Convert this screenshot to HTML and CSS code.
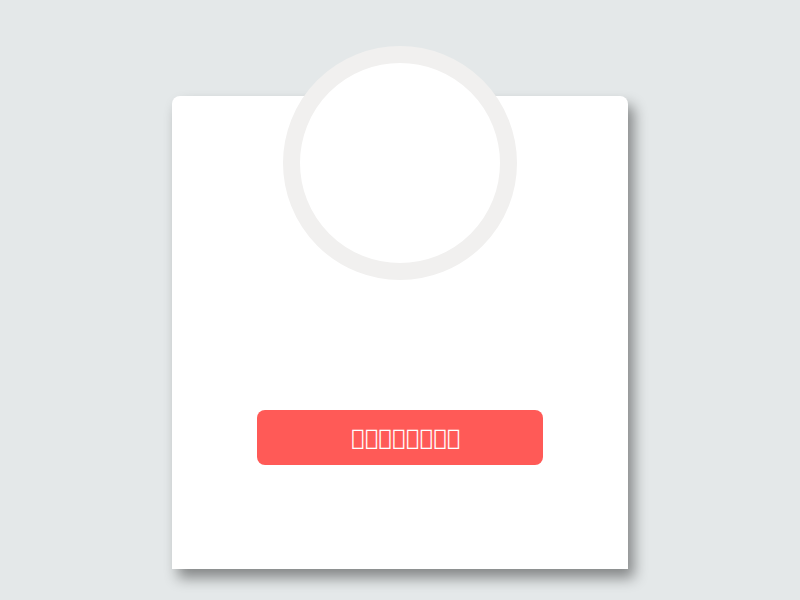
FILE: index.html
```html
<!DOCTYPE html>
<html lang="en">
<head>
  <meta charset="UTF-8">
  <meta name="viewport" content="width=device-width, initial-scale=1.0">
  <title>Card</title>
  <link rel="stylesheet" href="styles.css">
</head>
<body>

  <div class="card">
    <div class="avatar"></div>
    <button class="action-button">&#xE000;&#xE001;&#xE002;&#xE003;&#xE004;&#xE005;&#xE006;&#xE007;</button>
  </div>

</body>
</html>
```

FILE: styles.css
```css
body {
  margin: 0;
  height: 600px;
  background: #e4e8e9;
  font-family: "DejaVu Sans", sans-serif;
  overflow: hidden;
}
.card {
  box-sizing: border-box;
  width: 456px;
  height: 473px;
  margin: 96px auto 0;
  background: #fff;
  border-radius: 8px 8px 0 0;
  box-shadow: 6px 9px 14px rgba(0, 0, 0, 0.42);
  display: flex;
  flex-direction: column;
  align-items: center;
}
.avatar {
  box-sizing: border-box;
  width: 234px;
  height: 234px;
  margin-top: -50px;
  border: 17px solid #f1f0ef;
  border-radius: 50%;
  background: #fff;
}
.action-button {
  margin-top: 130px;
  width: 286px;
  height: 55px;
  padding: 0 0 0 12px;
  border: none;
  border-radius: 8px;
  background: #ff5a57;
  color: #fff;
  font-family: "DejaVu Sans", sans-serif;
  font-size: 22px;
  letter-spacing: 0.5px;
  cursor: pointer;
}
```
